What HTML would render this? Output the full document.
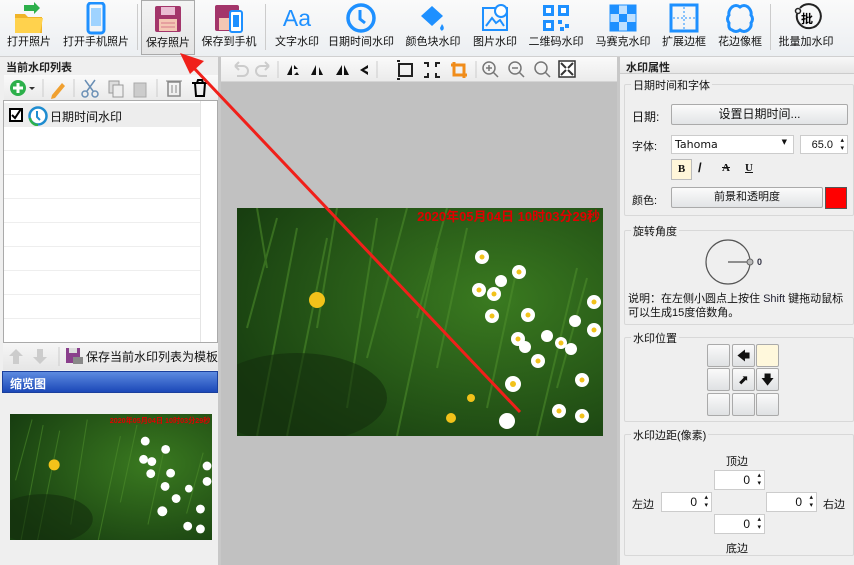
<!DOCTYPE html>
<html><head><meta charset="utf-8"><style>
*{margin:0;padding:0;box-sizing:border-box}
body{width:854px;height:565px;overflow:hidden;background:#efefef;font-family:"Liberation Sans","Noto Sans CJK SC",sans-serif;font-size:11px;color:#111;position:relative}
.abs{position:absolute}
#tb{left:0;top:0;width:854px;height:57px;background:linear-gradient(#fafafa,#eceff2);border-bottom:1px solid #d0d0d0}
.tbt{position:absolute;top:0;height:52px;text-align:center;font-size:11px;white-space:nowrap}
.tbt span{position:absolute;left:0;right:0;top:33px}
.sep{position:absolute;top:4px;width:1px;height:46px;background:#ccc}
.hdr{font-weight:bold;font-size:11px;color:#222}
.btn{position:absolute;background:linear-gradient(#fbfbfb,#e2e4e6);border:1px solid #aaa;border-radius:2px;text-align:center}
.grp{position:absolute;border:1px solid #d8d8d8;border-radius:2px}
.gt{position:absolute;top:-8px;left:6px;background:#efefef;padding:0 2px;font-size:11px}
.inp{position:absolute;background:#fff;border:1px solid #ccc;text-align:right;padding-right:14px;font-size:12px;height:20px;line-height:18px}
.inp:after{content:"▴\A▾";white-space:pre;position:absolute;right:3px;top:1px;font-size:7px;line-height:8px}
.cell{position:absolute;width:23px;height:23px;background:linear-gradient(#fafafa,#dfe1e3);border:1px solid #aaa;border-radius:2px;text-align:center;font-size:13px;line-height:21px}
</style></head><body>

<div id="tb" class="abs">
 <div class="tbt" style="left:2px;width:54px"><svg width="34" height="34" style="margin-top:2px"><path d="M3 12h10l3 3h14v16H3z" fill="#f0b429"/><path d="M3 16h28l-3 15H3z" fill="#ffd24d"/><path d="M12 3h10l0-3 6 6-6 6v-3h-10z" fill="#2db04b"/></svg><span>打开照片</span></div>
 <div class="tbt" style="left:60px;width:72px"><svg width="34" height="34" style="margin-top:2px"><rect x="9" y="1" width="16" height="30" rx="3" fill="none" stroke="#1e90ff" stroke-width="3"/><rect x="12" y="6" width="10" height="18" fill="#9fd3ff"/></svg><span>打开手机照片</span></div>
 <div class="sep" style="left:137px"></div>
 <div class="tbt" style="left:141px;width:54px;border:1px solid #aaa;background:linear-gradient(#f4f4f4,#e4e4e4);height:55px"><svg width="30" height="30" style="margin-top:3px"><rect x="2" y="2" width="26" height="26" rx="2" fill="#a3356a"/><rect x="8" y="3" width="14" height="8" fill="#e9bcd2"/><rect x="6" y="15" width="18" height="12" fill="#f4c7b4"/><path d="M8 19h14M8 23h14" stroke="#d87a8a"/></svg><span>保存照片</span></div>
 <div class="tbt" style="left:199px;width:60px"><svg width="32" height="30" style="margin-top:3px"><rect x="2" y="2" width="24" height="26" rx="2" fill="#a3356a"/><rect x="6" y="15" width="16" height="12" fill="#f4c7b4"/><rect x="17" y="8" width="12" height="21" rx="2" fill="#fff" stroke="#1e90ff" stroke-width="2"/><rect x="20" y="12" width="6" height="12" fill="#1e90ff"/></svg><span>保存到手机</span></div>
 <div class="sep" style="left:265px"></div>
 <div class="tbt" style="left:270px;width:54px"><div style="color:#1e90ff;font-size:23px;margin-top:5px;font-family:'Liberation Sans'">Aa</div><span>文字水印</span></div>
 <div class="tbt" style="left:325px;width:72px"><svg width="32" height="32" style="margin-top:2px"><circle cx="16" cy="16" r="13" fill="none" stroke="#1e90ff" stroke-width="3.5"/><path d="M15 8v9l5 4" fill="none" stroke="#1e90ff" stroke-width="3"/></svg><span>日期时间水印</span></div>
 <div class="tbt" style="left:402px;width:62px"><svg width="32" height="32" style="margin-top:2px"><path d="M4 14l11-10 11 10-11 10z" fill="#1e90ff"/><path d="M25 22q3 4 1 6t-3-2z" fill="#1e90ff"/></svg><span>颜色块水印</span></div>
 <div class="tbt" style="left:468px;width:54px"><svg width="32" height="32" style="margin-top:2px"><rect x="4" y="6" width="24" height="22" fill="none" stroke="#1e90ff" stroke-width="2"/><path d="M7 24l6-8 4 5 4-3 4 6" fill="none" stroke="#1e90ff" stroke-width="2"/><circle cx="22" cy="9" r="6" fill="#fff" stroke="#1e90ff" stroke-width="2"/></svg><span>图片水印</span></div>
 <div class="tbt" style="left:525px;width:62px"><svg width="32" height="32" style="margin-top:2px" fill="#1e90ff"><rect x="3" y="3" width="11" height="11"/><rect x="18" y="3" width="11" height="11"/><rect x="3" y="18" width="11" height="11"/><rect x="6" y="6" width="5" height="5" fill="#fff"/><rect x="21" y="6" width="5" height="5" fill="#fff"/><rect x="6" y="21" width="5" height="5" fill="#fff"/><rect x="18" y="18" width="4" height="4"/><rect x="25" y="22" width="4" height="4"/><rect x="20" y="25" width="4" height="4"/></svg><span>二维码水印</span></div>
 <div class="tbt" style="left:592px;width:62px"><svg width="32" height="32" style="margin-top:2px"><rect x="3" y="3" width="26" height="26" fill="#bfe0ff" stroke="#1e90ff"/><g fill="#1e90ff"><rect x="3" y="3" width="9" height="9"/><rect x="20" y="3" width="9" height="9"/><rect x="12" y="12" width="8" height="8"/><rect x="3" y="20" width="9" height="9"/><rect x="20" y="20" width="9" height="9"/></g></svg><span>马赛克水印</span></div>
 <div class="tbt" style="left:658px;width:52px"><svg width="32" height="32" style="margin-top:2px"><rect x="3" y="3" width="26" height="26" fill="none" stroke="#1e90ff" stroke-width="3"/><path d="M16 5v22M5 16h22" stroke="#1e90ff" stroke-dasharray="2 2"/></svg><span>扩展边框</span></div>
 <div class="tbt" style="left:714px;width:52px"><svg width="32" height="32" style="margin-top:2px"><path d="M8 5q4-3 8 0 4-3 8 0 4 4 3 8 3 4 0 8 1 4-3 7-4 3-8 0-4 3-8 0-4-1-3-7-3-4 0-8-1-4 3-8z" fill="none" stroke="#1e90ff" stroke-width="3"/></svg><span>花边像框</span></div>
 <div class="sep" style="left:770px"></div>
 <div class="tbt" style="left:774px;width:64px"><svg width="32" height="32" style="margin-top:2px"><path d="M10 6a12 12 0 1 1 -3 6" fill="none" stroke="#222" stroke-width="2"/><circle cx="8" cy="9" r="2.5" fill="none" stroke="#222" stroke-width="1.5"/><text x="11" y="21" font-size="12" font-weight="bold" font-family="Noto Sans CJK SC">批</text></svg><span>批量加水印</span></div>
</div>

<!-- left panel -->
<div class="abs hdr" style="left:6px;top:59px">当前水印列表</div>
<div class="abs" style="left:4px;top:75px;width:214px;height:25px;background:linear-gradient(#fafafa,#eaeaea)">
 <svg width="214" height="25"><circle cx="14" cy="13" r="8" fill="#2db04b"/><path d="M14 8v10M9 13h10" stroke="#fff" stroke-width="3"/><path d="M25 12l3 3 3-3z" fill="#333"/><line x1="39" y1="4" x2="39" y2="22" stroke="#ccc"/><path d="M48 20l10-12 3 3-10 12-4 1z" fill="#f0a030"/><line x1="70" y1="4" x2="70" y2="22" stroke="#ccc"/><g stroke="#6a8fb5" stroke-width="1.5" fill="none"><circle cx="81" cy="19" r="3"/><circle cx="91" cy="19" r="3"/><path d="M83 16l8-11M89 16l-8-11"/></g><rect x="105" y="6" width="10" height="12" fill="#ddd" stroke="#999"/><rect x="109" y="10" width="10" height="12" fill="#eee" stroke="#999"/><rect x="130" y="8" width="12" height="14" fill="#ccc" stroke="#aaa"/><line x1="153" y1="4" x2="153" y2="22" stroke="#ccc"/><rect x="164" y="7" width="12" height="14" fill="none" stroke="#888" stroke-width="1.5"/><path d="M162 6h16M168 10v8M172 10v8" stroke="#888"/><path d="M188 8h16M191 8l1 13h8l1-13M193 8l1-3h4l1 3" fill="none" stroke="#000" stroke-width="2"/></svg>
</div>
<div class="abs" style="left:3px;top:100px;width:215px;height:243px;background:#fff;border:1px solid #aaa">
 <div style="position:absolute;left:0;top:2px;width:196px;height:24px;background:#ededed"></div>
 <div style="position:absolute;left:196px;top:0;width:1px;height:241px;background:#e4e4e4"></div>
 <div style="position:absolute;left:0;top:49px;width:196px;border-top:1px solid #eee"></div>
 <div style="position:absolute;left:0;top:73px;width:196px;border-top:1px solid #eee"></div>
 <div style="position:absolute;left:0;top:97px;width:196px;border-top:1px solid #eee"></div>
 <div style="position:absolute;left:0;top:121px;width:196px;border-top:1px solid #eee"></div>
 <div style="position:absolute;left:0;top:145px;width:196px;border-top:1px solid #eee"></div>
 <div style="position:absolute;left:0;top:169px;width:196px;border-top:1px solid #eee"></div>
 <div style="position:absolute;left:0;top:193px;width:196px;border-top:1px solid #eee"></div>
 <div style="position:absolute;left:0;top:217px;width:196px;border-top:1px solid #eee"></div>
 <svg style="position:absolute;left:5px;top:5px" width="42" height="20"><rect x="1" y="3" width="12" height="12" fill="#fff" stroke="#000" stroke-width="2"/><path d="M3 9l3 3 6-9" fill="none" stroke="#000" stroke-width="2"/><circle cx="29" cy="10" r="8.5" fill="#fff" stroke="#1e8cd0" stroke-width="2.5"/><path d="M21 12a8 8 0 0 0 8 7" stroke="#2db04b" stroke-width="2.5" fill="none"/><path d="M28 5v6l3 3" stroke="#1e8cd0" stroke-width="2" fill="none"/></svg>
 <div style="position:absolute;left:46px;top:7px;font-size:12px">日期时间水印</div>
</div>
<div class="abs" style="left:3px;top:343px;width:215px;height:27px;background:linear-gradient(#f6f6f6,#e6e6e6)">
 <svg width="80" height="27"><path d="M13 6l7 7h-4v8h-6v-8H6z" fill="#ccc"/><path d="M37 21l7-7h-4V6h-6v8h-4z" fill="#ccc"/><line x1="56" y1="4" x2="56" y2="23" stroke="#ccc"/><rect x="63" y="5" width="14" height="15" fill="#8a3f8c"/><rect x="66" y="5" width="8" height="5" fill="#ddd"/><rect x="70" y="14" width="10" height="7" fill="#888"/></svg>
 <div style="position:absolute;left:83px;top:5px;font-size:12px">保存当前水印列表为模板</div>
</div>
<div class="abs" style="left:2px;top:371px;width:216px;height:22px;background:linear-gradient(#5d8be0,#1b48b8);border:1px solid #1a3f9c;color:#fff;font-weight:bold;font-size:12px;padding:3px 7px">缩览图</div>
<div class="abs" style="left:218px;top:57px;width:3px;height:508px;background:#c8c8c8"></div>

<!-- canvas -->
<div class="abs" style="left:221px;top:57px;width:396px;height:508px;background:#c1c1c1"></div>
<div class="abs" style="left:221px;top:57px;width:396px;height:25px;background:linear-gradient(#fafafa,#ebebeb);border-bottom:1px solid #d4d4d4">
 <svg width="396" height="25"><g fill="none" stroke="#ccc" stroke-width="2"><path d="M14 9h8a5 5 0 0 1 0 10h-6M14 9l4-4M14 9l4 4"/><path d="M48 9h-8a5 5 0 0 0 0 10h6M48 9l-4-4M48 9l-4 4"/></g><line x1="57" y1="4" x2="57" y2="21" stroke="#ccc"/><g fill="#111"><path d="M66 18l5-10v10z"/><path d="M73 8l4 4h-4zM73 18h5l-2-3z"/><path d="M90 18l5-10v10zM98 10l4 8h-4z"/><path d="M115 18l6-10v10zM123 8l5 10h-5z" /><path d="M147 8l-8 5 8 5v-3l-4-2 4-2z"/></g><line x1="156" y1="4" x2="156" y2="21" stroke="#ccc"/><rect x="178" y="7" width="13" height="12" fill="none" stroke="#222" stroke-width="2"/><path d="M176 4h3M176 22h3M203 6h4v4M203 20h4v-4M219 6h-4v4M219 20h-4v-4" stroke="#222" stroke-width="2" fill="none"/><path d="M233 5v13h13M230 8h13v13" stroke="#f08c1a" stroke-width="3" fill="none"/><line x1="255" y1="4" x2="255" y2="21" stroke="#ccc"/><g fill="none" stroke="#777" stroke-width="1.5"><circle cx="268" cy="11" r="6"/><path d="M272 15l5 5M265 11h6M268 8v6"/><circle cx="294" cy="11" r="6"/><path d="M298 15l5 5M291 11h6"/><circle cx="320" cy="11" r="6"/><path d="M324 15l5 5"/></g><rect x="338" y="4" width="16" height="16" fill="#fff" stroke="#333" stroke-width="1.5"/><path d="M340 6l5 5M352 6l-5 5M340 18l5-5M352 18l-5-5" stroke="#333" stroke-width="2"/></svg>
</div>

<svg class="abs" style="left:237px;top:208px" width="366" height="228" viewBox="0 0 366 228">
 <defs><radialGradient id="g1" cx="0.7" cy="0.4" r="0.8"><stop offset="0" stop-color="#3a7a20"/><stop offset="1" stop-color="#173d10"/></radialGradient></defs>
 <rect width="366" height="228" fill="url(#g1)"/>
 <g stroke="#4f8f2c" stroke-width="2" opacity="0.55"><path d="M20 228L60 20M50 228L90 30M110 200L140 10M160 228L200 40M200 160L230 20M250 200L280 60M320 180L350 70M10 120L40 10M80 120L100 0M300 228L340 60M130 150L170 0M180 110L210 0M30 60L20 0"/></g>
 <ellipse cx="60" cy="190" rx="90" ry="45" fill="#142f0d" opacity="0.6"/>
 <g fill="#fff"><circle cx="245" cy="49" r="7"/><circle cx="282" cy="64" r="7"/><circle cx="264" cy="73" r="6"/><circle cx="242" cy="82" r="7"/><circle cx="257" cy="86" r="7"/><circle cx="255" cy="108" r="7"/><circle cx="291" cy="107" r="7"/><circle cx="310" cy="128" r="6"/><circle cx="281" cy="131" r="7"/><circle cx="288" cy="139" r="6"/><circle cx="324" cy="135" r="6"/><circle cx="334" cy="141" r="6"/><circle cx="301" cy="153" r="7"/><circle cx="338" cy="113" r="6"/><circle cx="357" cy="94" r="7"/><circle cx="357" cy="122" r="7"/><circle cx="345" cy="172" r="7"/><circle cx="276" cy="176" r="8"/><circle cx="322" cy="203" r="7"/><circle cx="345" cy="208" r="7"/><circle cx="270" cy="213" r="8"/></g>
 <g fill="#f2c21a"><circle cx="245" cy="49" r="2.5"/><circle cx="282" cy="64" r="2.5"/><circle cx="242" cy="82" r="2.5"/><circle cx="257" cy="86" r="2.5"/><circle cx="255" cy="108" r="2.5"/><circle cx="291" cy="107" r="2.5"/><circle cx="281" cy="131" r="2.5"/><circle cx="324" cy="135" r="2.5"/><circle cx="301" cy="153" r="2.5"/><circle cx="357" cy="94" r="2.5"/><circle cx="357" cy="122" r="2.5"/><circle cx="345" cy="172" r="2.5"/><circle cx="276" cy="176" r="3"/><circle cx="322" cy="203" r="2.5"/><circle cx="345" cy="208" r="2.5"/><circle cx="80" cy="92" r="8"/><circle cx="234" cy="190" r="4"/><circle cx="214" cy="210" r="5"/></g>
 <text x="363" y="13" text-anchor="end" fill="#e00000" font-weight="bold" font-size="13" font-family="Liberation Sans, Noto Sans CJK SC, sans-serif">2020年05月04日 10时03分29秒</text>
</svg>

<svg class="abs" style="left:10px;top:414px" width="202" height="126" viewBox="0 0 366 228" preserveAspectRatio="none">
 <rect width="366" height="228" fill="url(#g1)"/>
 <g stroke="#4f8f2c" stroke-width="2" opacity="0.55"><path d="M20 228L60 20M50 228L90 30M110 200L140 10M160 228L200 40M200 160L230 20M250 200L280 60M320 180L350 70M10 120L40 10"/></g>
 <ellipse cx="60" cy="190" rx="90" ry="45" fill="#142f0d" opacity="0.6"/>
 <g fill="#fff"><circle cx="245" cy="49" r="8"/><circle cx="282" cy="64" r="8"/><circle cx="242" cy="82" r="8"/><circle cx="257" cy="86" r="8"/><circle cx="255" cy="108" r="8"/><circle cx="291" cy="107" r="8"/><circle cx="281" cy="131" r="8"/><circle cx="324" cy="135" r="7"/><circle cx="301" cy="153" r="8"/><circle cx="357" cy="94" r="8"/><circle cx="357" cy="122" r="8"/><circle cx="345" cy="172" r="8"/><circle cx="276" cy="176" r="9"/><circle cx="322" cy="203" r="8"/><circle cx="345" cy="208" r="8"/></g>
 <circle cx="80" cy="92" r="10" fill="#f2c21a"/>
 <text x="363" y="16" text-anchor="end" fill="#e00000" font-weight="bold" font-size="13" font-family="Liberation Sans, Noto Sans CJK SC, sans-serif">2020年05月04日 10时03分29秒</text>
</svg>

<!-- arrow -->
<svg class="abs" style="left:0;top:0" width="854" height="565"><line x1="520" y1="412" x2="192" y2="66" stroke="#f0201a" stroke-width="3"/><path d="M180 53l24 8-14 13z" fill="#f0201a"/></svg>

<!-- right panel -->
<div class="abs" style="left:617px;top:57px;width:3px;height:508px;background:#c8c8c8"></div>
<div class="abs" style="left:620px;top:57px;width:234px;height:17px;background:linear-gradient(#f8f8f8,#e6e6e6);border-bottom:1px solid #ccc"><span class="hdr" style="position:absolute;left:6px;top:2px">水印属性</span></div>
<div class="grp" style="left:624px;top:84px;width:230px;height:132px"><span class="gt">日期时间和字体</span></div>
<div class="abs" style="left:632px;top:108px;font-size:12px">日期:</div>
<div class="btn" style="left:671px;top:104px;width:177px;height:21px;line-height:19px;font-size:12px">设置日期时间...</div>
<div class="abs" style="left:632px;top:138px;font-size:11px">字体:</div>
<div class="abs" style="left:671px;top:135px;width:123px;height:19px;background:#fff;border:1px solid #ccc;font-size:11px;padding:2px 3px;font-family:'DejaVu Sans',sans-serif">Tahoma<span style="position:absolute;right:6px;top:2px;font-size:7px">▼</span></div>
<div class="inp" style="left:800px;top:135px;width:48px;height:19px;font-size:11px">65.0</div>
<div class="abs" style="left:671px;top:159px;width:21px;height:21px;background:#fff6d9;border:1px solid #bbb;font-weight:bold;text-align:center;line-height:19px;font-family:'Liberation Serif'">B</div>
<div class="abs" style="left:698px;top:160px;font-weight:bold;font-size:13px">/</div>
<div class="abs" style="left:722px;top:162px;font-weight:bold;font-family:'Liberation Serif';text-decoration:line-through">A</div>
<div class="abs" style="left:745px;top:162px;font-weight:bold;font-family:'Liberation Serif';text-decoration:underline">U</div>
<div class="abs" style="left:632px;top:192px;font-size:11px">颜色:</div>
<div class="btn" style="left:671px;top:187px;width:152px;height:21px;line-height:19px;font-size:11px">前景和透明度</div>
<div class="abs" style="left:825px;top:187px;width:22px;height:22px;background:#f00;border:1px solid #555"></div>

<div class="grp" style="left:624px;top:230px;width:230px;height:95px"><span class="gt">旋转角度</span></div>
<svg class="abs" style="left:700px;top:238px" width="70" height="50"><circle cx="28" cy="24" r="22" fill="none" stroke="#555" stroke-width="1.2"/><line x1="28" y1="24" x2="50" y2="24" stroke="#555" stroke-width="1.2"/><circle cx="50" cy="24" r="3" fill="#bbb" stroke="#666"/><text x="57" y="27" font-size="9" font-weight="bold" fill="#334" font-family="Liberation Sans">0</text></svg>
<div class="abs" style="left:628px;top:292px;font-size:11px;line-height:14px;width:225px">说明：在左侧小圆点上按住 <span style="color:#223">Shift</span> 键拖动鼠标可以生成15度倍数角。</div>

<div class="grp" style="left:624px;top:337px;width:230px;height:85px"><span class="gt">水印位置</span></div>
<div class="cell" style="left:707px;top:344px"></div><div class="cell" style="left:732px;top:344px">🡄</div><div class="cell" style="left:756px;top:344px;background:#fff8dc"></div>
<div class="cell" style="left:707px;top:368px"></div><div class="cell" style="left:732px;top:368px">⬈</div><div class="cell" style="left:756px;top:368px">🡇</div>
<div class="cell" style="left:707px;top:393px"></div><div class="cell" style="left:732px;top:393px"></div><div class="cell" style="left:756px;top:393px"></div>

<div class="grp" style="left:624px;top:434px;width:230px;height:122px"><span class="gt">水印边距(像素)</span></div>
<div class="abs" style="left:726px;top:453px">顶边</div>
<div class="inp" style="left:714px;top:470px;width:51px">0</div>
<div class="abs" style="left:632px;top:496px">左边</div>
<div class="inp" style="left:661px;top:492px;width:51px">0</div>
<div class="inp" style="left:766px;top:492px;width:51px">0</div>
<div class="abs" style="left:823px;top:496px">右边</div>
<div class="inp" style="left:714px;top:514px;width:51px">0</div>
<div class="abs" style="left:726px;top:540px">底边</div>
</body></html>
